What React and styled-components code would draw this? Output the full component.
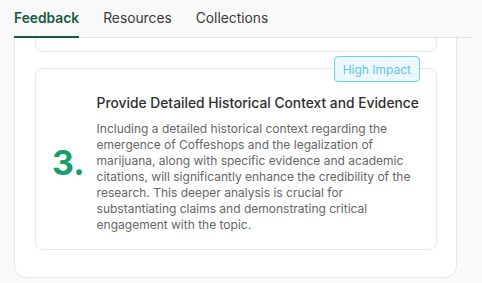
import React from 'react';
import styled, { createGlobalStyle } from 'styled-components';

const GlobalStyle = createGlobalStyle`
  * { box-sizing: border-box; }
  html, body {
    margin: 0;
    padding: 0;
    background: #f9f9f9;
    font-family: Inter, "Noto Sans", "Liberation Sans", sans-serif;
  }
`;

const tabs = ['Feedback', 'Resources', 'Collections'];

const item = {
  number: 3,
  badge: 'High Impact',
  title: 'Provide Detailed Historical Context and Evidence',
  text: 'Including a detailed historical context regarding the emergence of Coffeshops and the legalization of marijuana, along with specific evidence and academic citations, will significantly enhance the credibility of the research. This deeper analysis is crucial for substantiating claims and demonstrating critical engagement with the topic.'
};

const App = () => {
  return (
    <>
      <GlobalStyle />
      <Page>
        <TabBar>
          {tabs.map((t, i) => (
            <Tab key={t} active={i === 0}>{t}</Tab>
          ))}
        </TabBar>
        <Viewport>
          <Panel>
            <PrevCard />
            <Card>
              <Badge>{item.badge}</Badge>
              <Number>{item.number}.</Number>
              <Content>
                <Title>{item.title}</Title>
                <Body>{item.text}</Body>
              </Content>
            </Card>
          </Panel>
        </Viewport>
      </Page>
    </>
  );
};

const Page = styled.div`
  width: 482px;
  height: 283px;
  padding-left: 14px;
  overflow: hidden;
`;

const TabBar = styled.div`
  display: flex;
  gap: 24px;
  width: 459px;
  height: 38px;
  border-bottom: 1px solid #e3e3e3;
`;

const Tab = styled.div`
  display: flex;
  align-items: center;
  height: 38px;
  margin-bottom: -1px;
  font-size: 13.8px;
  font-weight: ${p => (p.active ? 600 : 400)};
  color: ${p => (p.active ? '#1b5a42' : '#3a3a3a')};
  border-bottom: 2px solid ${p => (p.active ? '#145a3e' : 'transparent')};
`;

const Viewport = styled.div`
  height: 245px;
  width: 443px;
  overflow: hidden;
  display: flex;
  flex-direction: column;
  justify-content: flex-end;
  padding-bottom: 5px;
`;

const Panel = styled.div`
  flex-shrink: 0;
  display: flex;
  flex-direction: column;
  gap: 16px;
  background: #fff;
  border: 1px solid #e6e6e6;
  border-radius: 12px;
  padding: 0 19px 27px 20px;
`;

const PrevCard = styled.div`
  height: 80px;
  border: 1px solid #e8e8e8;
  border-radius: 8px;
`;

const Card = styled.div`
  position: relative;
  display: flex;
  align-items: center;
  gap: 12px;
  border: 1px solid #e8e8e8;
  border-radius: 8px;
  padding: 24px 16px 16px 16px;
`;

const Badge = styled.span`
  position: absolute;
  top: -13px;
  right: 16px;
  height: 26px;
  padding: 0 8px;
  display: flex;
  align-items: center;
  font-size: 12px;
  color: #5fc6f2;
  background: #ecf8fe;
  border: 1px solid #6fcff6;
  border-radius: 4px;
`;

const Number = styled.div`
  flex-shrink: 0;
  font-size: 34px;
  font-weight: 700;
  line-height: 1;
  color: #12a06a;
`;

const Content = styled.div`
  flex: 1;
  display: flex;
  flex-direction: column;
  gap: 8px;
`;

const Title = styled.div`
  font-size: 13.8px;
  font-weight: 500;
  line-height: 20px;
  color: #2e2e2e;
  white-space: nowrap;
`;

const Body = styled.p`
  margin: 0;
  font-size: 12px;
  line-height: 16px;
  color: #666;
`;

export default App;
